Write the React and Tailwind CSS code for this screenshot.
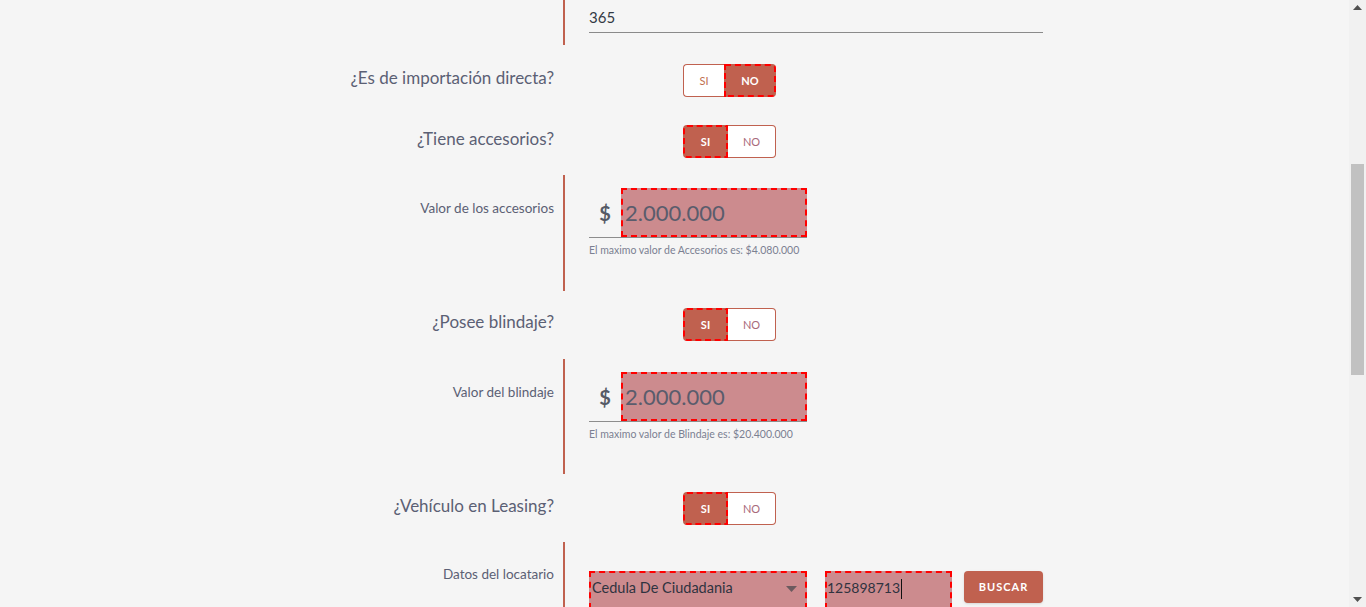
import React from "react";

const FONT = { fontFamily: "Lato, 'Liberation Sans', sans-serif" };

function Toggle({ active }) {
  const siActive = active === "SI";
  return (
    <div className="flex h-[33px] text-[11px] leading-none">
      {siActive ? (
        <div className="flex w-[45px] items-center justify-center rounded-l-[4px] border-2 border-dashed border-[#ff0000] bg-[#c0614f] font-bold text-white">
          SI
        </div>
      ) : (
        <div className="flex w-[41px] items-center justify-center rounded-l-[4px] border border-r-0 border-[#c0614f] bg-white text-[#c0704f]">
          SI
        </div>
      )}
      {siActive ? (
        <div className="flex w-[48px] items-center justify-center rounded-r-[4px] border border-l-0 border-[#c0614f] bg-white text-[#a8697a]">
          NO
        </div>
      ) : (
        <div className="flex w-[52px] items-center justify-center rounded-r-[4px] border-2 border-dashed border-[#ff0000] bg-[#c0614f] font-bold text-white">
          NO
        </div>
      )}
    </div>
  );
}

function ToggleRow({ label, active, mt }) {
  return (
    <div className={`flex h-[33px] ${mt}`}>
      <div className="w-[249px] pr-[1px] text-right text-[17px] leading-[28px] text-[#5b6074]">
        {label}
      </div>
      <div className="pl-[128px]">
        <Toggle active={active} />
      </div>
    </div>
  );
}

function Section({ label, height, mt, labelPt = "pt-[24px]", children }) {
  return (
    <div className={`flex ${height} ${mt}`}>
      <div
        className={`w-[249px] pr-[1px] text-right text-[13.5px] leading-[18px] text-[#5b6074] ${labelPt}`}
      >
        {label}
      </div>
      <div className="ml-[8px] w-[480px] border-l-2 border-[#c0614f] pl-[24px]">
        {children}
      </div>
    </div>
  );
}

function MoneyField({ value, help }) {
  return (
    <div className="pt-[13px]">
      <div className="flex w-[218px] items-stretch border-b border-[#8d8d8d]">
        <div className="flex w-[32px] items-center justify-center text-[20px] font-bold text-[#555a66]">
          $
        </div>
        <div className="flex h-[49px] w-[186px] items-center border-2 border-dashed border-[#ff0000] bg-[#cc8b8e] pl-[2px] text-[22px] text-[#5a5c6c]">
          {value}
        </div>
      </div>
      <div className="mt-[5px] text-[10.5px] leading-[14px] text-[#7b8092]">{help}</div>
    </div>
  );
}

export default function App() {
  return (
    <div className="flex h-[607px] w-full overflow-hidden bg-[#f5f5f5]" style={FONT}>
      <div className="flex-1">
        <div className="mx-auto w-[737px]">
          <Section label="" height="h-[45px]" mt="">
            <div className="h-[33px] w-[454px] border-b border-[#8a8a8a] pt-[7px] text-[15px] leading-[20px] text-[#333a44]">
              365
            </div>
          </Section>

          <ToggleRow label="¿Es de importación directa?" active="NO" mt="mt-[19px]" />
          <ToggleRow label="¿Tiene accesorios?" active="SI" mt="mt-[28px]" />

          <Section label="Valor de los accesorios" height="h-[116px]" mt="mt-[17px]">
            <MoneyField value="2.000.000" help="El maximo valor de Accesorios es: $4.080.000" />
          </Section>

          <ToggleRow label="¿Posee blindaje?" active="SI" mt="mt-[17px]" />

          <Section label="Valor del blindaje" height="h-[115px]" mt="mt-[18px]">
            <MoneyField value="2.000.000" help="El maximo valor de Blindaje es: $20.400.000" />
          </Section>

          <ToggleRow label="¿Vehículo en Leasing?" active="SI" mt="mt-[18px]" />

          <Section label="Datos del locatario" height="h-[80px]" mt="mt-[17px]" labelPt="pt-[23px]">
            <div className="flex items-start pt-[29px]">
              <div className="flex h-[38px] w-[218px] items-start justify-between border-2 border-dashed border-[#ff0000] bg-[#cc8b8e] pl-[1px] pr-[8px] pt-[5px] text-[14.5px] leading-[20px] text-[#2f3340]">
                <span>Cedula De Ciudadania</span>
                <svg width="11" height="6" viewBox="0 0 11 6" className="mt-[8px]">
                  <path d="M0 0 L11 0 L5.5 6 Z" fill="#6b5a5e" />
                </svg>
              </div>
              <div className="ml-[18px] flex h-[38px] w-[127px] items-start border-2 border-dashed border-[#ff0000] bg-[#cc8b8e] pt-[5px] text-[14px] leading-[20px] text-[#2f3340]">
                <span>125898713</span>
                <span className="ml-[1px] mt-[1px] h-[20px] w-[1px] bg-[#111]" />
              </div>
              <button className="ml-[12px] h-[32px] w-[79px] rounded-[4px] bg-[#c0614f] text-[11px] font-bold tracking-[1px] text-white shadow-sm">
                BUSCAR
              </button>
            </div>
          </Section>
        </div>
      </div>
      <div className="flex w-[17px] flex-col items-center bg-[#f1f1f1]">
        <svg width="9" height="5" viewBox="0 0 9 5" className="mt-[5px]">
          <path d="M0 5 L9 5 L4.5 0 Z" fill="#505050" />
        </svg>
        <div className="mt-[154px] h-[211px] w-[13px] bg-[#c1c1c1]" />
        <div className="flex-1" />
        <svg width="9" height="5" viewBox="0 0 9 5" className="mb-[5px]">
          <path d="M0 0 L9 0 L4.5 5 Z" fill="#505050" />
        </svg>
      </div>
    </div>
  );
}
